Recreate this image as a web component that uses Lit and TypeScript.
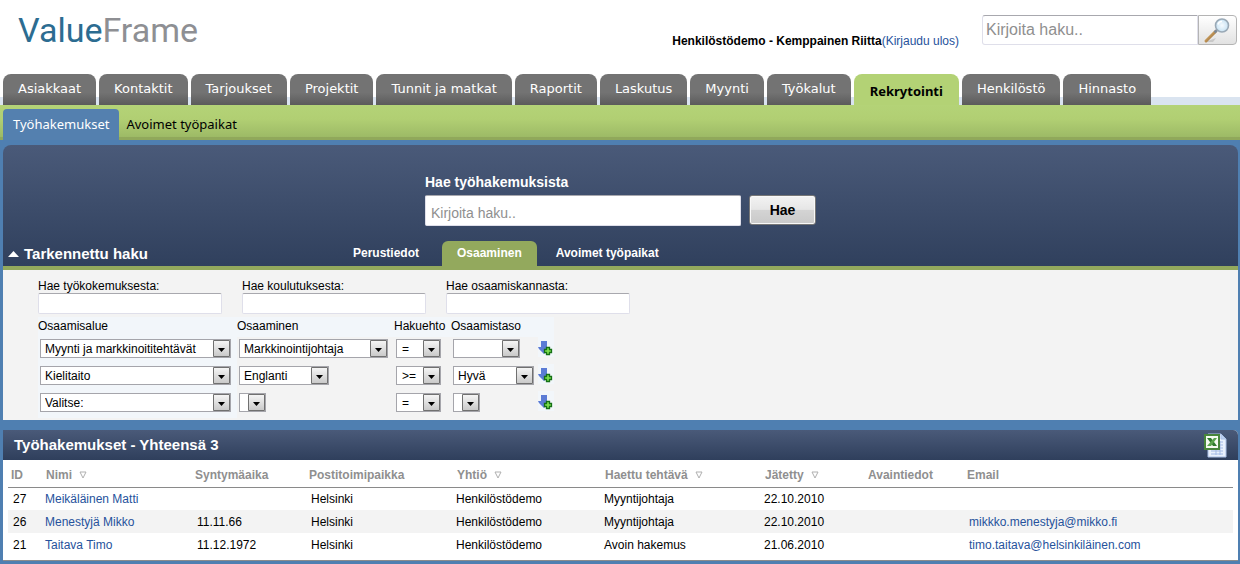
import { LitElement, html, css, nothing } from "lit";
import { customElement } from "lit/decorators.js";
import { classMap } from "lit/directives/class-map.js";

interface Criterion {
  area: string;
  skill: string;
  skillSize: string;
  op: string;
  level: string;
  levelSize: string;
}

const MAIN_TABS = [
  "Asiakkaat", "Kontaktit", "Tarjoukset", "Projektit", "Tunnit ja matkat", "Raportit",
  "Laskutus", "Myynti", "Työkalut", "Rekrytointi", "Henkilöstö", "Hinnasto",
];

const CRITERIA: Criterion[] = [
  { area: "Myynti ja markkinoititehtävät", skill: "Markkinointijohtaja", skillSize: "full", op: "=", level: "", levelSize: "medium" },
  { area: "Kielitaito", skill: "Englanti", skillSize: "large", op: ">=", level: "Hyvä", levelSize: "full" },
  { area: "Valitse:", skill: "", skillSize: "tiny", op: "=", level: "", levelSize: "tiny" },
];

const COLUMNS = [
  { key: "id", label: "ID", sortable: false },
  { key: "name", label: "Nimi", sortable: true },
  { key: "born", label: "Syntymäaika", sortable: false },
  { key: "city", label: "Postitoimipaikka", sortable: false },
  { key: "company", label: "Yhtiö", sortable: true },
  { key: "job", label: "Haettu tehtävä", sortable: true },
  { key: "left", label: "Jätetty", sortable: true },
  { key: "tags", label: "Avaintiedot", sortable: false },
  { key: "email", label: "Email", sortable: false },
];

const ROWS: Record<string, string>[] = [
  { id: "27", name: "Meikäläinen Matti", born: "", city: "Helsinki", company: "Henkilöstödemo", job: "Myyntijohtaja", left: "22.10.2010", tags: "", email: "" },
  { id: "26", name: "Menestyjä Mikko", born: "11.11.66", city: "Helsinki", company: "Henkilöstödemo", job: "Myyntijohtaja", left: "22.10.2010", tags: "", email: "mikkko.menestyja@mikko.fi" },
  { id: "21", name: "Taitava Timo", born: "11.12.1972", city: "Helsinki", company: "Henkilöstödemo", job: "Avoin hakemus", left: "21.06.2010", tags: "", email: "timo.taitava@helsinkiläinen.com" },
];

const base = css`
  *, *::before, *::after { box-sizing: border-box; }
  a { color: #26529c; text-decoration: none; }
  svg { display: block; }
  button, input, select { font-family: inherit; margin: 0; }
  h1, h2, p { margin: 0; }
`;

@customElement("vf-header")
class VfHeader extends LitElement {
  static styles = [base, css`
    :host { display: flex; justify-content: space-between; align-items: flex-start; height: 74px; padding: 0 3px 0 18px; background: #fff; }
    .logo { margin-top: 7px; font: 400 34px/46px Roboto, sans-serif; color: #8e8f93; }
    .logo .brand { color: #2c6c91; }
    .right { display: flex; align-items: flex-start; gap: 23px; padding-top: 15px; }
    .user { padding-top: 18px; line-height: 16px; color: #26529c; }
    .user strong { color: #000; }
    .search { display: flex; }
    .search input { width: 216px; height: 30px; padding: 0 3px; border: 1px solid #dfdfea; border-top-color: #a8a8ae; border-radius: 3px 0 0 3px; font-size: 16px; color: #222; outline: none; }
    .search input::placeholder { color: #8f8f8f; opacity: 1; }
    .search button { width: 39px; height: 30px; padding: 0 0 0 4px; border: 1px solid #b4b4b4; border-radius: 0 4px 4px 0; background: linear-gradient(#fff, #e2e2e2); }
  `];
  render() {
    return html`
      <h1 class="logo"><span class="brand">Value</span>Frame</h1>
      <div class="right">
        <p class="user"><strong>Henkilöstödemo - Kemppainen Riitta</strong>(<a href="#">Kirjaudu ulos</a>)</p>
        <form class="search" role="search">
          <input type="text" aria-label="Haku" placeholder="Kirjoita haku.." />
          <button type="button" aria-label="Hae">
            <svg width="28" height="28" viewBox="0 0 28 28">
              <defs>
                <linearGradient id="wood" x1="0" y1="0" x2="1" y2="1"><stop offset="0" stop-color="#eac27e" /><stop offset="1" stop-color="#8a5a26" /></linearGradient>
                <radialGradient id="glass"><stop offset="0" stop-color="#f5fbff" /><stop offset="1" stop-color="#c8e2f3" /></radialGradient>
              </defs>
              <path d="M2 26h8l3-4z" fill="#c9c9c9" />
              <path d="M12.500 15.500 3 25" stroke="url(#wood)" stroke-width="3" stroke-linecap="round" />
              <path d="M14.500 13.500l-3 3" stroke="#7c8794" stroke-width="2.500" />
              <circle cx="19" cy="9.500" r="6.500" fill="url(#glass)" stroke="#9aa9b6" stroke-width="1.600" />
              <path d="M15 8.500a4 4 0 0 1 4-3" fill="none" stroke="#fff" stroke-width="1.500" />
            </svg>
          </button>
        </form>
      </div>`;
  }
}

@customElement("vf-nav")
class VfNav extends LitElement {
  static styles = [base, css`
    :host { display: block; font-family: "Noto Sans", sans-serif; font-size: 13px; }
    .tabs { display: flex; gap: 3px; padding-left: 3px; background: linear-gradient(#fff 23px, #dae4f0 23px); }
    .tab { height: 31px; padding: 0 15px; border-radius: 8px 8px 0 0; background: linear-gradient(#737373 60%, #5b5b5b); color: #fff; line-height: 30px; white-space: nowrap; font-family: "DejaVu Sans", Verdana, sans-serif; }
    .active { padding: 0 16px; background: #b3d275; color: #000; font-family: "Noto Sans", sans-serif; font-weight: bold; line-height: 35px; }
    .sub { display: flex; height: 35px; padding: 4px 0 0 3px; background: linear-gradient(#b4d377, #b1cf73 40%, #9dba66 32px, #90a85b 32px); }
    .sub a { height: 31px; padding: 0 7px; line-height: 31px; color: #000; }
    .sub .current { padding: 0 10px; border-radius: 4px 4px 0 0; background: #5480af; color: #fff; }
  `];
  render() {
    return html`
      <nav class="tabs" aria-label="Päävalikko">
        ${MAIN_TABS.map((t) => html`<a href="#" class=${classMap({ tab: true, active: t === "Rekrytointi" })}>${t}</a>`)}
      </nav>
      <nav class="sub" aria-label="Alavalikko">
        <a href="#" class="current">Työhakemukset</a>
        <a href="#">Avoimet työpaikat</a>
      </nav>`;
  }
}

@customElement("vf-search")
class VfSearch extends LitElement {
  static styles = [base, css`
    :host { display: block; }
    .hero { border-radius: 8px 8px 0 0; background: linear-gradient(#4a5a79, #2f3f5c); color: #fff; padding-top: 28px; }
    .query { display: grid; grid-template-columns: 316px 67px; justify-content: center; column-gap: 8px; }
    .query label { grid-column: 1 / -1; font-size: 14px; font-weight: bold; line-height: 18px; padding-bottom: 4px; }
    .query input { height: 31px; padding: 4px 5px 0; border: 1px solid #dfdfea; border-top-color: #a8a8ae; border-radius: 2px; font-size: 14px; outline: none; }
    .query input::placeholder { color: #8f8f8f; opacity: 1; }
    .query button { height: 30px; padding: 0; border: 1px solid #777; border-radius: 3px; box-shadow: inset 0 0 0 1px #f8f8f8; background: linear-gradient(#f3f3f3, #e6e6e6 48%, #d4d4d4 50%, #c9c9c9); font-size: 14px; font-weight: bold; color: #000; }
    .bar { display: grid; grid-template-columns: 330px 1fr; align-items: end; margin-top: 15px; padding-left: 5px; border-bottom: 4px solid #93a95d; }
    .toggle { display: flex; align-items: center; gap: 5px; height: 25px; padding: 0; border: 0; background: none; color: #fff; font-size: 15px; font-weight: bold; }
    .tabs { display: flex; gap: 4px; }
    .tabs a { height: 25px; padding: 0 15px; border-radius: 6px 6px 0 0; line-height: 24px; font-weight: bold; color: #fff; }
    .tabs .current { margin: 0 0 0 4px; background: #93a95d; }
    .body { padding: 9px 0 2px 35px; background: #f3f3f3; }
    .texts { display: flex; gap: 20px; }
    .texts label { display: block; width: 184px; line-height: 14px; }
    .texts input { display: block; width: 100%; height: 21px; border: 1px solid #dfdfea; border-top-color: #a8a8ae; border-radius: 2px; }
    .criteria { display: grid; grid-template-columns: 199px 157px 57px 87px 16px; width: max-content; margin-top: 3px; }
    .criteria span { height: 20px; line-height: 18px; background: #f2f6fa; }
    .cell { height: 27px; padding: 2px 0 0 2px; }
    .cell.area-cell { background: #f2f6fa; }
    .pick { appearance: none; display: block; height: 19px; padding: 0 20px 0 4px; border: 1px solid #a5a5ab; border-radius: 0; font-size: 12px; line-height: 16px; color: #000;
      background: url("data:image/svg+xml,%3Csvg xmlns='http://www.w3.org/2000/svg' width='17' height='17'%3E%3Cdefs%3E%3ClinearGradient id='a' x2='0' y2='1'%3E%3Cstop stop-color='%23f6f6f6'/%3E%3Cstop offset='1' stop-color='%23c8c8c8'/%3E%3C/linearGradient%3E%3C/defs%3E%3Cpath fill='url(%23a)' stroke='%23707070' d='M.5.5h16v16H.5z'/%3E%3Cpath d='M5 8h7l-3.500 4z'/%3E%3C/svg%3E") right center no-repeat #fff; }
    .area { width: 191px; }
    .skill.full { width: 149px; }
    .skill.large { width: 90px; }
    .op { width: 45px; padding-left: 5px; }
    .level.medium { width: 67px; }
    .level.full { width: 81px; }
    .tiny { width: 27px; }
    .add { display: flex; padding: 4px 0 0; width: 16px; height: 20px; border: 0; background: #f2f6fa; }
  `];

  private pick(kind: string, size: string, value: string, label: string) {
    return html`<div class="cell ${kind}-cell"><select class="pick ${kind} ${size}" aria-label=${label}><option>${value}</option></select></div>`;
  }

  render() {
    return html`
      <div class="hero">
        <form class="query">
          <label for="q">Hae työhakemuksista</label>
          <input id="q" type="text" placeholder="Kirjoita haku.." />
          <button type="button">Hae</button>
        </form>
        <div class="bar">
          <button class="toggle" type="button" aria-expanded="true">
            <svg width="11" height="6" viewBox="0 0 11 6"><path d="M5.500 0 11 6H0z" fill="#fff" /></svg>Tarkennettu haku
          </button>
          <nav class="tabs" aria-label="Hakuryhmät">
            <a href="#">Perustiedot</a><a href="#" class="current">Osaaminen</a><a href="#">Avoimet työpaikat</a>
          </nav>
        </div>
      </div>
      <form class="body">
        <div class="texts">
          ${["Hae työkokemuksesta:", "Hae koulutuksesta:", "Hae osaamiskannasta:"].map((t) => html`<label>${t}<input type="text" /></label>`)}
        </div>
        <div class="criteria">
          <span>Osaamisalue</span><span>Osaaminen</span><span>Hakuehto</span><span>Osaamistaso</span><span></span>
          ${CRITERIA.map((c) => html`
            ${this.pick("area", "", c.area, "Osaamisalue")}
            ${this.pick("skill", c.skillSize, c.skill, "Osaaminen")}
            ${this.pick("op", "", c.op, "Hakuehto")}
            ${this.pick("level", c.levelSize, c.level, "Osaamistaso")}
            <button class="add" type="button" aria-label="Lisää ehto">
              <svg width="15" height="16" viewBox="0 0 15 16">
                <path d="M3 0h6v6h3v1l-6 6-5-5-1-2h3z" fill="#5b7bd5" />
                <path d="M8.500 6.500h3v2h2v3h-2v2h-3v-2h-2v-3h2z" fill="#7fe04f" stroke="#157015" stroke-width="1.300" />
              </svg>
            </button>`)}
        </div>
      </form>`;
  }
}

@customElement("vf-results")
class VfResults extends LitElement {
  static styles = [base, css`
    :host { display: block; background: #fff; border-bottom: 1px solid #8c8c8c; border-radius: 0 5px 0 0; }
    .head { display: flex; justify-content: space-between; align-items: center; height: 30px; padding: 0 10px 0 11px; border-radius: 0 5px 0 0; background: linear-gradient(#4a5a79, #2f3f5c); color: #fff; }
    h2 { font-size: 15px; line-height: 30px; }
    .export { padding: 0; border: 0; background: none; }
    .list { padding: 4px 5px 4px; }
    table { width: 100%; border-collapse: collapse; table-layout: fixed; }
    th { height: 23px; padding: 0 0 0 3px; border-bottom: 1px solid #8a8a8a; color: #8f8f8f; text-align: left; white-space: nowrap; }
    th svg { display: inline-block; margin-left: 7px; }
    td { height: 23px; padding: 0 0 0 4px; white-space: nowrap; }
    tr:nth-child(even) td { background: #f3f3f3; }
    .id { width: 34px; }
    .name { width: 150px; }
    .born { width: 114px; }
    .city { width: 147px; }
    .company { width: 148px; }
    .job { width: 160px; }
    .left { width: 103px; }
    .tags { width: 100px; }
    td.id, td.born, td.city, td.email { padding-left: 5px; }
    td.name, td.company, td.job, td.left { padding-left: 3px; }
    th.name, th.company, th.job, th.left, th.tags { padding-left: 4px; }
  `];
  render() {
    return html`
      <div class="head">
        <h2>Työhakemukset - Yhteensä 3</h2>
        <button class="export" type="button" aria-label="Vie Exceliin">
          <svg width="25" height="25" viewBox="0 0 25 25">
            <path d="M5 1h13l5 5v18H5z" fill="#e9f1fd" stroke="#a9bfe4" />
            <path d="M18 1v5h5z" fill="#bcd0f0" stroke="#a9bfe4" />
            <path d="M8 9h12M8 12h12M8 15h12M8 18h12M8 21h12M13 8v14M17 8v14" stroke="#a3bbe6" />
            <path d="M2 2h14v14H2z" fill="#f4faf0" stroke="#48853b" stroke-width="2" />
            <path d="M4 5h4l6 8h-4z" fill="#2f7a2c" /><path d="M11 5h3l-6 8H4z" fill="#5aa34c" />
          </svg>
        </button>
      </div>
      <div class="list">
        <table>
          <thead><tr>${COLUMNS.map((c) => html`<th class=${c.key}>${c.label}${c.sortable ? html`<svg width="8" height="8" viewBox="0 0 8 8"><path d="M1 1h6L4 7z" fill="#fff" stroke="#b0b0b0" /></svg>` : nothing}</th>`)}</tr></thead>
          <tbody>${ROWS.map((r) => html`<tr>${COLUMNS.map((c) => html`<td class=${c.key}>${(c.key === "name" || c.key === "email") && r[c.key] ? html`<a href="#">${r[c.key]}</a>` : r[c.key]}</td>`)}</tr>`)}</tbody>
        </table>
      </div>`;
  }
}

@customElement("app-root")
class AppRoot extends LitElement {
  static styles = [base, css`
    :host { display: block; min-height: 100vh; background: #4f7fb1; font-family: "Liberation Sans", Arial, sans-serif; font-size: 12px; color: #000; }
    main { display: grid; gap: 10px; padding: 5px 2px 2px 3px; }
  `];
  render() {
    return html`<vf-header></vf-header><vf-nav></vf-nav><main><vf-search></vf-search><vf-results></vf-results></main>`;
  }
}
